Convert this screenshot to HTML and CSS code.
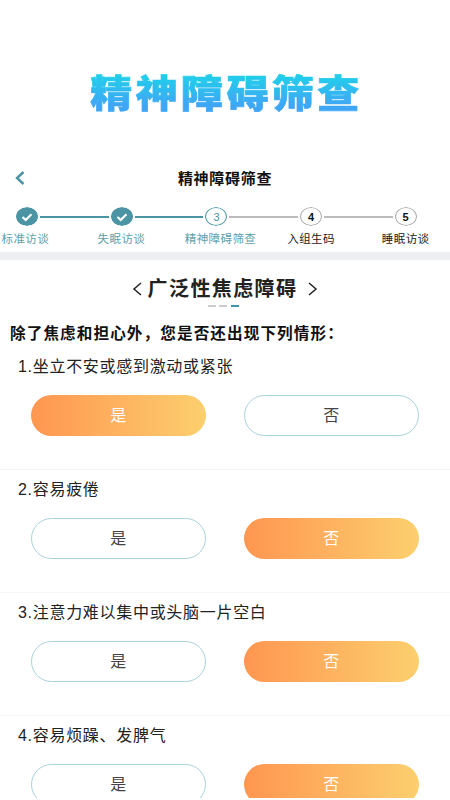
FILE: index.html
```
<!DOCTYPE html>
<html lang="zh">
<head>
<meta charset="utf-8">
<title>精神障碍筛查</title>
<link rel="stylesheet" href="styles.css">
</head>
<body>
<div class="page">
  <header class="banner"><h1 class="logo">精神障碍筛查</h1></header>
  <nav class="navbar">
    <svg class="back" viewBox="0 0 12 16" width="12" height="16"><path d="M9.5 2 L3 8 L9.5 14" fill="none" stroke="#4a94a3" stroke-width="2.4"/></svg>
    <span class="nav-title">精神障碍筛查</span>
  </nav>
  <section class="stepper">
    <div class="step done"><span class="dot"><svg viewBox="0 0 12 10" width="12" height="10"><path d="M1.5 5 L4.7 8 L10.5 2.2" fill="none" stroke="#fff" stroke-width="2.2"/></svg></span><span class="label">标准访谈</span></div>
    <div class="step done"><span class="dot"><svg viewBox="0 0 12 10" width="12" height="10"><path d="M1.5 5 L4.7 8 L10.5 2.2" fill="none" stroke="#fff" stroke-width="2.2"/></svg></span><span class="label">失眠访谈</span></div>
    <div class="step current"><span class="dot">3</span><span class="label">精神障碍筛查</span></div>
    <div class="step todo"><span class="dot">4</span><span class="label">入组生码</span></div>
    <div class="step todo last"><span class="dot">5</span><span class="label">睡眠访谈</span></div>
  </section>
  <div class="band"></div>
  <section class="heading">
    <div class="heading-row">
      <svg class="chev" viewBox="0 0 10 16" width="10" height="16"><path d="M9 2 L2 8 L9 14" fill="none" stroke="#222" stroke-width="1.5"/></svg>
      <h2 class="heading-title">广泛性焦虑障碍</h2>
      <svg class="chev" viewBox="0 0 10 16" width="10" height="16"><path d="M1 2 L8 8 L1 14" fill="none" stroke="#222" stroke-width="1.5"/></svg>
    </div>
    <div class="pager"><i></i><i></i><i class="on"></i></div>
  </section>
  <p class="intro">除了焦虑和担心外，您是否还出现下列情形：</p>
  <section class="q first">
    <p class="q-text">1.坐立不安或感到激动或紧张</p>
    <div class="opts"><button class="opt on">是</button><button class="opt">否</button></div>
  </section>
  <section class="q">
    <p class="q-text">2.容易疲倦</p>
    <div class="opts"><button class="opt">是</button><button class="opt on">否</button></div>
  </section>
  <section class="q">
    <p class="q-text">3.注意力难以集中或头脑一片空白</p>
    <div class="opts"><button class="opt">是</button><button class="opt on">否</button></div>
  </section>
  <section class="q">
    <p class="q-text">4.容易烦躁、发脾气</p>
    <div class="opts"><button class="opt">是</button><button class="opt on">否</button></div>
  </section>
</div>
</body>
</html>
```
FILE: styles.css
```
* { box-sizing: border-box; }
html, body { margin: 0; padding: 0; background: #fff; }
body { font-family: "Liberation Sans", "Noto Sans CJK SC", sans-serif; color: #222; }
.page { width: 450px; height: 798px; overflow: hidden; background: #fff; }
p, h1, h2 { margin: 0; }

.banner { height: 163px; padding-top: 66px; display: flex; justify-content: center; }
.logo {
  font-family: "Noto Sans CJK SC", sans-serif;
  font-size: 42px; line-height: 50px; height: 50px; font-weight: 900; letter-spacing: 3.4px;
  white-space: nowrap; margin-left: 3px;
  background: linear-gradient(180deg, #22cdea 18%, #3fa6f6 82%);
  -webkit-background-clip: text; background-clip: text;
  color: transparent;
  -webkit-text-stroke: 0.8px transparent;
  transform: scaleY(0.9);
}

.navbar { height: 30px; display: flex; align-items: center; justify-content: center; position: relative; }
.back { position: absolute; left: 14px; top: 7px; }
.nav-title { font-size: 15px; letter-spacing: 0.7px; line-height: 20px; margin-top: 1px; font-weight: 700; color: #111; }

.stepper { display: flex; width: 473px; margin-left: -20px; height: 59px; padding-top: 14px; }
.step { flex: 1 1 0; display: flex; flex-direction: column; align-items: center; position: relative; min-width: 0; }
.step::after { content: ""; position: absolute; left: 50%; width: 100%; top: 9px; height: 1.5px; background: #bbb; }
.step.done::after { background: #4a94a3; }
.step.last::after { display: none; }
.dot {
  width: 22px; height: 19px; border-radius: 50%; position: relative; z-index: 1;
  display: flex; align-items: center; justify-content: center;
  font-size: 11px; background: #fff; outline: 2px solid #fff;
}
.done .dot { background: #4a94a3; }
.current .dot { border: 1px solid #4a94a3; color: #4a94a3; }
.todo .dot { border: 1px solid #aaa; color: #111; font-weight: 700; }
.label { font-size: 11.5px; letter-spacing: 0.4px; line-height: 14px; margin-top: 6px; white-space: nowrap; }
.done .label, .current .label { color: #5c9fae; }
.todo .label { color: #222; }
.step:nth-child(1) .label { margin-left: -4px; }
.step:nth-child(2) .label { margin-left: -1px; }
.step:nth-child(3) .label { margin-left: 8px; }

.band { height: 8px; background: #eeeff2; }

.heading { padding-top: 16px; height: 53px; }
.heading-row { display: flex; justify-content: center; align-items: center; gap: 6px; height: 26px; }
.heading-title { font-size: 20px; letter-spacing: 1.4px; line-height: 26px; font-weight: 700; color: #222; margin: 0 5px 0 0; }
.pager { display: flex; justify-content: center; gap: 3.5px; margin: 3px 4px 0 0; }
.pager i { width: 8px; height: 2px; background: #ccc; }
.pager i.on { background: #3d96a6; }

.intro { font-size: 15.6px; letter-spacing: 1.1px; line-height: 20px; font-weight: 700; color: #111; padding-left: 10px; margin-top: 11px; white-space: nowrap; }

.q { height: 123px; padding: 10px 0 0 18px; border-bottom: 1px solid #f3f4f6; }
.q.first { height: 126px; padding-top: 13px; }
.q-text { font-size: 16px; letter-spacing: 0.7px; line-height: 20px; color: #222; white-space: nowrap; }
.opts { display: flex; gap: 38.5px; margin: 18px 0 0 13px; }
.opt {
  width: 174.5px; height: 41px; border-radius: 21px; background: #fff;
  border: 1px solid #a9d3da; font: inherit; font-size: 16px; color: #444; padding: 0 0 4px;
}
.opt.on { border: 0; background: linear-gradient(90deg, #ff9650 0%, #fccf6e 100%); color: #fff; }
```
